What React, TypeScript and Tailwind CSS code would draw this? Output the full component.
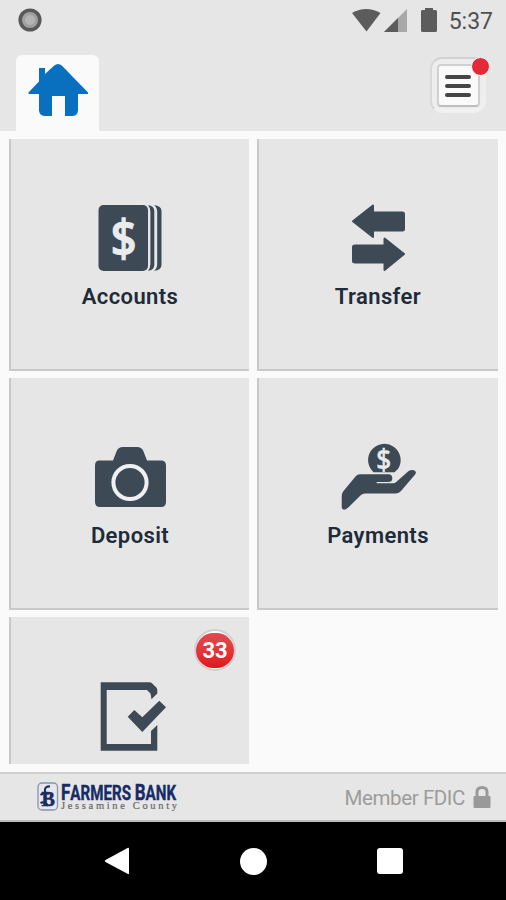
import React from "react";

interface Tile {
	title: string;
	icon: React.ReactNode;
	badge?: number;
}

const AccountsIcon = () => (
	<svg width="81" height="70" viewBox="0 0 81 70" fill="#3d4a55">
		<rect x="9.5" y="2" width="49.5" height="66" rx="5" />
		<path d="M59 2.3Q65.3 2.8 65.3 8V62Q65.3 67.2 59 67.7Q61.4 65.5 61.4 61V9Q61.4 4.5 59 2.3Z" />
		<path d="M65 2.3Q72.5 2.8 72.5 8V62Q72.5 67.2 65 67.7Q68.2 65.5 68.2 61V9Q68.2 4.5 65 2.3Z" />
		<text
			transform="translate(34.5 52.5) scale(.9 1)"
			textAnchor="middle"
			fontSize="50"
			fontWeight="500"
			fill="#e9ebed"
			className="font-['Noto_Sans',sans-serif]"
			stroke="#e9ebed"
			strokeWidth="1.3"
		>
			$
		</text>
	</svg>
);

const TransferIcon = () => (
	<svg
		width="81"
		height="70"
		viewBox="0 0 81 70"
		fill="#3d4a55"
		stroke="#3d4a55"
		strokeWidth="2"
		strokeLinejoin="round"
	>
		<path d="M16 18.3L36 2.5V9.5H65.5Q67 9.5 67 11V26Q67 27.5 65.5 27.5H36V34Z" />
		<path d="M67 51L47.5 35.5V42.5H18Q16 42.5 16 44V58Q16 59.5 18 59.5H47.5V67Z" />
	</svg>
);

const CameraIcon = () => (
	<svg width="81" height="70" viewBox="0 0 81 70" fill="#3d4a55">
		<path d="M10.5 18.5H24L27.5 9.5Q29 5 34 5H48Q53 5 54.5 9.5L58 18.5H72Q77 18.5 77 23.5V60Q77 65 72 65H11Q6 65 6 60V23.5Q6 18.5 10.5 18.5Z" />
		<circle
			cx="41"
			cy="40.5"
			r="16.6"
			fill="none"
			stroke="#eef0f1"
			strokeWidth="4"
		/>
	</svg>
);

const PaymentsIcon = () => (
	<svg width="81" height="70" viewBox="0 0 81 70" fill="#3d4a55" className="overflow-visible">
		<path d="M36.5 30.2A16.3 16.3 0 1 1 61 27L57.5 30.2Z" />
		<text
			transform="translate(46.8 28) scale(.9 1)"
			textAnchor="middle"
			fontSize="29"
			fontWeight="500"
			fill="#e9ebed"
			stroke="#e9ebed"
			strokeWidth=".5"
			className="font-['Noto_Sans',sans-serif]"
		>
			$
		</text>
		<path d="M4.7 54Q4.7 51 6.5 49L18.5 34.5Q20.3 32.3 23 32.3H51.5Q55.3 32.3 55.3 36.5Q55.3 40 51 40H39.7V41.3H56Q58 41.3 59.5 39.8L71.3 29.3Q73.5 27.6 77 28.2Q80 29.5 78.3 32.2L64 49Q62 51.4 59 51.4H28Q25.5 51.4 24 53L11.3 65.5Q8 68.5 5.8 67.3Q4.7 66.8 4.7 65Z" />
	</svg>
);

const ChecklistIcon = () => (
	<svg width="81" height="70" viewBox="0 0 81 70" fill="#3d4a55">
		<path d="M11.7 1.3H60.5Q62 1.3 63 2.3L67.3 6.5Q68.3 7.5 68.3 9V12.5L62.5 18.3L61.5 12.5L58 9H17.7V63H62V50L68.3 44V69.7H11.7Z" />
		<path d="M38.7 35.7L45.3 29L53.3 36.3L70.3 19.7L77 26.3L53.3 51Z" />
	</svg>
);

const TILES: Tile[] = [
	{ title: "Accounts", icon: <AccountsIcon /> },
	{ title: "Transfer", icon: <TransferIcon /> },
	{ title: "Deposit", icon: <CameraIcon /> },
	{ title: "Payments", icon: <PaymentsIcon /> },
	{ title: "", icon: <ChecklistIcon />, badge: 33 },
];

function StatusBar() {
	return (
		<div className="flex h-[40px] items-center justify-between pl-[18px] pr-[13px]">
			<svg width="24" height="24" viewBox="0 0 24 24">
				<circle cx="12" cy="12" r="9.8" fill="#a0a0a0" stroke="#595959" strokeWidth="3.6" />
				<circle cx="12" cy="12" r="5" fill="#b4b4b4" />
			</svg>
			<div className="flex items-center">
				<svg width="88" height="28" viewBox="0 0 88 28" fill="#5c5c5c">
					<path d="M1 7Q15 -1 29.5 7L15.5 25.5Z" />
					<path d="M56 3V26H33Z" fill="#a8a8a8" />
					<path d="M47 12V26H33Z" />
					<path d="M71 4H74V2H82V4H84.5Q86 4 86 5.5V24.5Q86 26 84.5 26H71.5Q70 26 70 24.5V5.5Q70 4 71 4Z" />
				</svg>
				<span className="ml-[10px] mt-[2px] text-[23px] leading-none text-[#505050]">
					5:37
				</span>
			</div>
		</div>
	);
}

function Header() {
	return (
		<header className="h-[131px] shrink-0 bg-[#e6e6e6]">
			<StatusBar />
			<div className="flex h-[91px] items-start justify-between pl-[16px] pr-[20px] pt-[15px]">
				<div className="flex h-[76px] w-[83px] justify-center rounded-t-[6px] bg-[#fafafa] pt-[8px]">
					<svg width="62" height="54" viewBox="0 0 62 54" fill="#0870bf">
						<path d="M12 5H18V11L27 2.8Q31 -.7 35 2.8L61 29.5V31H51V47.5Q50.5 52.5 45.5 53H38V33H25V53H17.5Q12.5 52.5 12 47.5V31H1.5V29.5L12 18.5Z" />
					</svg>
				</div>
				<div className="relative mt-[2px] flex size-[56px] items-center justify-center rounded-[12px] border-2 border-[#efefef] border-t-[#d2d2d2] border-l-[#d8d8d8] bg-[#ededed] shadow-[inset_0_-1px_2px_#f8f8f8]">
					<div className="mt-px flex size-[43px] flex-col items-center justify-center gap-[5px] rounded-[4px] border-2 border-[#d0d0d0] border-b-[#bebebe] bg-[#fafafa]">
						<span className="h-[4px] w-[26px] rounded-full bg-[#454545]" />
						<span className="h-[4px] w-[26px] rounded-full bg-[#454545]" />
						<span className="h-[4px] w-[26px] rounded-full bg-[#454545]" />
					</div>
					<span className="absolute -right-[6px] -top-[2px] size-[19px] rounded-full border-[1.5px] border-[#f5f5f5] bg-[#e42a39]" />
				</div>
			</div>
		</header>
	);
}

function Footer() {
	return (
		<footer className="flex h-[50px] shrink-0 items-center justify-between border-t-2 border-b-2 border-t-[#cfcfcf] border-b-[#bdbdbd] bg-[#e6e6e6] pl-[36px] pr-[15px]">
			<svg width="160" height="32" viewBox="0 0 160 32" className="overflow-visible">
				<rect x="2" y="2" width="19.5" height="27" rx="4" fill="#e4e7eb" stroke="#8794a8" strokeWidth="1.3" />
				<text x="5.5" y="25" fontSize="20" fontWeight="700" fill="#1c2c62" stroke="#1c2c62" strokeWidth=".5" className="font-['Liberation_Serif',serif]">
					B
				</text>
				<path d="M14 5.5Q8 5 9 11V24M4.5 14Q8 11 13 13M4.5 22Q9 20 12 25" fill="none" stroke="#1c2c62" strokeWidth="2.2" />
				<text
					x="25"
					y="19"
					fontWeight="700"
					fill="#172b66"
					stroke="#172b66"
					strokeWidth=".4"
					textLength="115"
					lengthAdjust="spacingAndGlyphs"
					className="font-['Roboto',sans-serif]"
				>
					<tspan fontSize="22.5">F</tspan>
					<tspan fontSize="20">ARMERS </tspan>
					<tspan fontSize="22.5">B</tspan>
					<tspan fontSize="20">ANK</tspan>
				</text>
				<text
					x="25"
					y="28.3"
					fontSize="10.5"
					fill="#66666c"
					stroke="#66666c"
					strokeWidth=".2"
					textLength="116"
					className="font-['Liberation_Serif',serif]"
				>
					Jessamine County
				</text>
			</svg>
			<div className="flex items-center gap-[8px]">
				<span className="mt-[2px] text-[20.5px] leading-none tracking-[-0.4px] text-[#9c9c9c]">
					Member FDIC
				</span>
				<svg width="18" height="24" viewBox="0 0 18 24">
					<path d="M4 12V7Q4 2.5 9 2.5T14 7V12" fill="none" stroke="#999" strokeWidth="3" />
					<rect x=".5" y="11" width="17" height="12" rx="1" fill="#999" />
				</svg>
			</div>
		</footer>
	);
}

function NavBar() {
	return (
		<nav className="flex h-[78px] shrink-0 items-center justify-between bg-black pl-[104px] pr-[103px]">
			<svg width="26" height="28" viewBox="0 0 26 28" fill="#fff">
				<path d="M24 .8Q25 .5 25 2V26Q25 27.5 24 27L1.5 15Q0 14 1.5 13Z" />
			</svg>
			<span className="size-[27px] rounded-full bg-white" />
			<span className="size-[26px] rounded-[3px] bg-white" />
		</nav>
	);
}

export default function App() {
	return (
		<div className="flex h-[900px] w-[506px] flex-col overflow-hidden bg-[#fafafa] font-['Roboto',sans-serif]">
			<Header />

			{/* Menu tiles, the last row runs on below the fold */}
			<main className="min-h-0 flex-1 py-[8px] pl-[9px] pr-[8px]">
				<div className="grid h-full auto-rows-[232px] grid-cols-[240px_241px] gap-x-[8px] gap-y-[7px] overflow-hidden">
					{TILES.map((tile, i) => (
						<div
							key={i}
							className="relative flex flex-col items-center border-b-2 border-l-2 border-[#c9c9c9] bg-[#e6e6e6] pt-[64px] odd:pr-px even:pr-[2px]"
						>
							{tile.icon}
							<h3 className="mt-[8px] pl-px text-[22px] font-semibold leading-[31px] tracking-[0.4px] text-[#1e2b38]">
								{tile.title}
							</h3>
							{tile.badge && (
								<span className="absolute right-[13px] top-[12px] flex h-[42px] w-[42px] items-center justify-center rounded-full border-2 border-[#d0d0d0] bg-[#fafafa]">
									<span className="flex h-[35px] w-[38px] items-center justify-center rounded-full bg-gradient-to-b from-[#e04a50] to-[#e5101b] pt-[2px] text-[22px] font-bold leading-none text-white">
										{tile.badge}
									</span>
								</span>
							)}
						</div>
					))}
				</div>
			</main>

			<Footer />
			<NavBar />
		</div>
	);
}
